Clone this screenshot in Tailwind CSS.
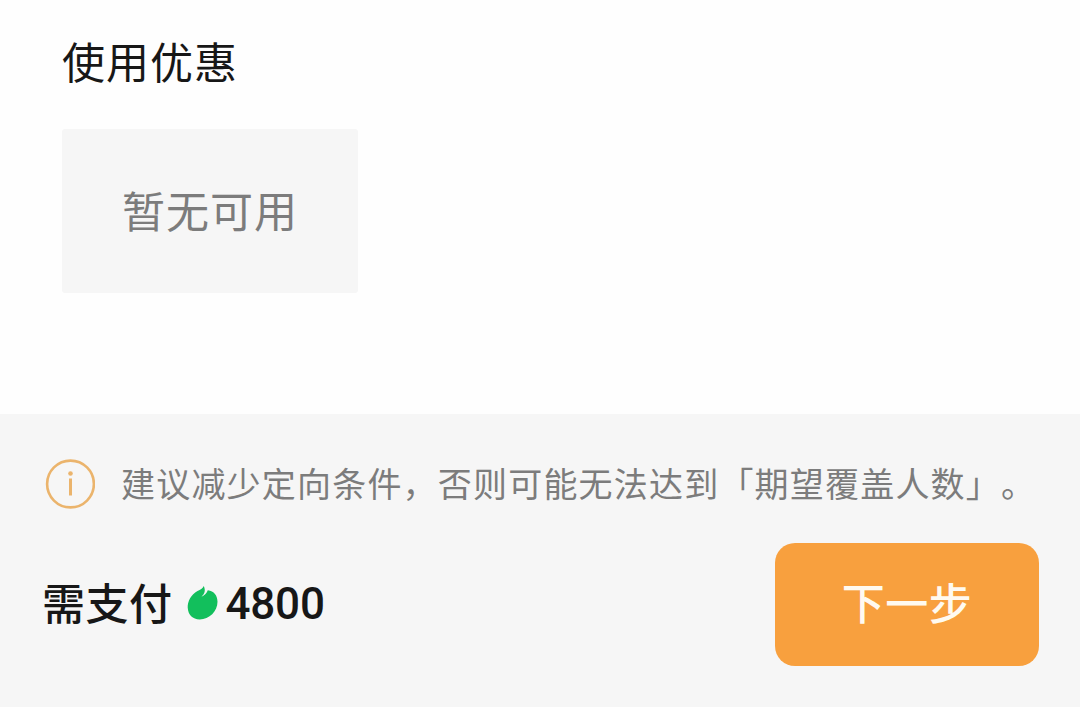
<!DOCTYPE html>
<html lang="zh-CN">
  <head>
    <meta charset="UTF-8">
    <meta name="viewport" content="width=device-width, initial-scale=1.0">
    <title>使用优惠</title>
    <script src="https://cdn.jsdelivr.net/npm/@tailwindcss/browser@4"></script>
  </head>
  <body class="bg-[#fefefe] font-['Noto_Sans_CJK_SC',sans-serif] text-[#171717]">
    <div class="flex h-screen flex-col overflow-hidden">
      <main class="flex-1 px-[62px] pt-[28px]">
        <h1 class="text-[43px] leading-[64px] tracking-[1px]">使用优惠</h1>
        <div class="mt-[37px] flex h-[164px] w-[296px] items-center justify-center rounded-[3px] bg-[#f6f6f6] pb-1 text-[43px] leading-[64px] tracking-[1px] text-[#7c7c7c]">暂无可用</div>
      </main>

      <footer class="h-[293px] bg-[#f6f6f6] pt-[45px] pr-[41px] pl-[42px]">
        <div class="flex h-[50px] items-center">
          <svg class="ml-[3px] h-[50px] w-[50px] shrink-0" viewBox="0 0 50 50" fill="none">
            <circle cx="25.5" cy="25" r="23.4" stroke="#ebb46c" stroke-width="2.6"/>
            <circle cx="25.5" cy="14.5" r="2.3" fill="#ebb46c"/>
            <path d="M25.500 19.500v17" stroke="#ebb46c" stroke-width="3"/>
          </svg>
          <p class="ml-[26px] pb-[2px] text-[34px] leading-[50px] tracking-[1.2px] whitespace-nowrap text-[#7c7c7c] [text-spacing-trim:space-all]">建议减少定向条件，否则可能无法达到「期望覆盖人数」。</p>
        </div>

        <div class="mt-[34px] flex h-[123px] items-center justify-between">
          <div class="flex items-center font-medium">
            <span class="pb-[8px] text-[43px] leading-[64px] tracking-[0.5px]">需支付</span>
            <svg class="ml-[13px] h-[38px] w-[34px]" viewBox="0 0 34 38">
              <path fill="#12bf5c" d="M11.500 5C5 8.500 1.500 15.500 1.700 21.500c.3 7.200 5 11.900 12 11.900 9.700 0 17.800-8 17.800-17.600C31.500 9.500 28 5 21.800 4.300c-1 2.800-3 4.900-6.300 6.400 3.200-2.900 4.300-5.800 2.300-10.700C16.500 2.500 14.500 3.600 11.500 5z"/>
            </svg>
            <span class="ml-[6px] pb-[2px] font-['Roboto',sans-serif] text-[44px] leading-[64px] tracking-[-0.2px]">4800</span>
          </div>
          <button class="h-[123px] w-[264px] rounded-[20px] bg-[#f8a03e] pb-[6px] text-[43px] font-medium tracking-[0.5px] text-[#fffaf0]">下一步</button>
        </div>
      </footer>
    </div>
  </body>
</html>
